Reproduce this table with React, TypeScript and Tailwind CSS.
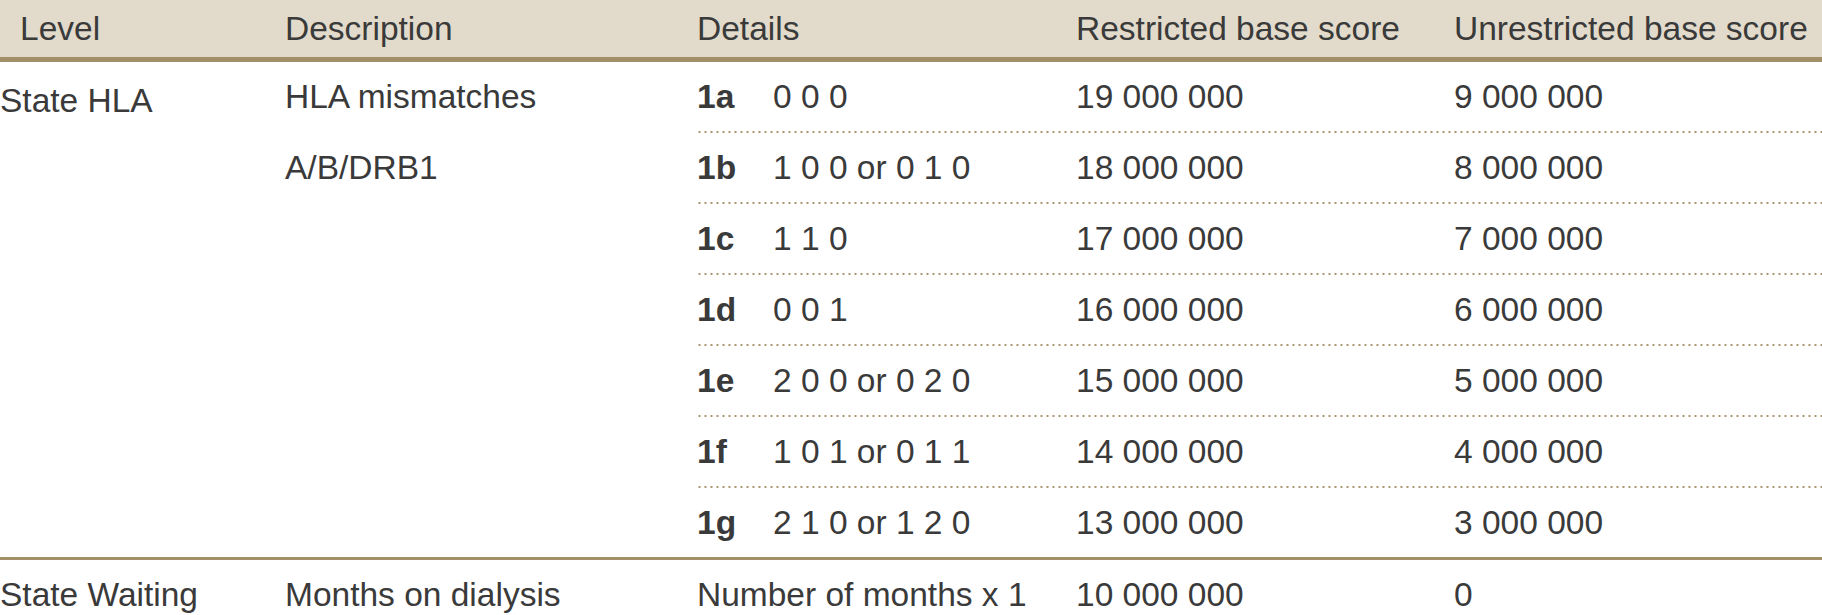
const COLS = "grid grid-cols-[379px_378px_1fr]";

const HLA_ROWS = [
  { code: "1a", detail: "0 0 0", restricted: "19 000 000", unrestricted: "9 000 000" },
  { code: "1b", detail: "1 0 0 or 0 1 0", restricted: "18 000 000", unrestricted: "8 000 000" },
  { code: "1c", detail: "1 1 0", restricted: "17 000 000", unrestricted: "7 000 000" },
  { code: "1d", detail: "0 0 1", restricted: "16 000 000", unrestricted: "6 000 000" },
  { code: "1e", detail: "2 0 0 or 0 2 0", restricted: "15 000 000", unrestricted: "5 000 000" },
  { code: "1f", detail: "1 0 1 or 0 1 1", restricted: "14 000 000", unrestricted: "4 000 000" },
  { code: "1g", detail: "2 1 0 or 1 2 0", restricted: "13 000 000", unrestricted: "3 000 000" },
];

export default function App() {
  return (
    <div className="min-h-screen w-[1822px] overflow-hidden bg-white font-['Liberation_Sans',Arial,sans-serif] text-[33.5px] leading-none text-[#3a3a3a]">
      {/* Header */}
      <div className="grid h-[62px] grid-cols-[285px_412px_379px_378px_1fr] items-center border-b-[5px] border-[#a38f68] bg-[#e2dbcb] whitespace-nowrap">
        <div className="pl-5">Level</div>
        <div>Description</div>
        <div>Details</div>
        <div>Restricted base score</div>
        <div>Unrestricted base score</div>
      </div>

      {/* State HLA */}
      <div className="flex border-b-[3px] border-[#a38f68]">
        <div className="w-[285px] shrink-0 pt-[22px] whitespace-nowrap">State HLA</div>
        <div className="flex w-[412px] shrink-0 flex-col whitespace-nowrap">
          <div className="flex h-[71px] items-center pb-[2px]">HLA mismatches</div>
          <div className="flex h-[71px] items-center pb-[2px]">A/B/DRB1</div>
        </div>
        <div className="flex-1">
          {HLA_ROWS.map((row, i) => (
            <div
              key={row.code}
              className={`${COLS} items-center whitespace-nowrap ${
                i < HLA_ROWS.length - 1
                  ? "h-[71px] pb-[2px] bg-[linear-gradient(to_right,#ab9770_2px,transparent_2px)] bg-[length:6px_2px] bg-bottom bg-repeat-x"
                  : "h-[69px]"
              }`}
            >
              <div className="flex items-center">
                <span className="w-[76px] font-bold">{row.code}</span>
                <span>{row.detail}</span>
              </div>
              <div>{row.restricted}</div>
              <div>{row.unrestricted}</div>
            </div>
          ))}
        </div>
      </div>

      {/* State Waiting */}
      <div className="grid h-[69px] grid-cols-[285px_412px_379px_378px_1fr] items-center whitespace-nowrap">
        <div>State Waiting</div>
        <div>Months on dialysis</div>
        <div>Number of months x 1</div>
        <div>10 000 000</div>
        <div>0</div>
      </div>
    </div>
  );
}
